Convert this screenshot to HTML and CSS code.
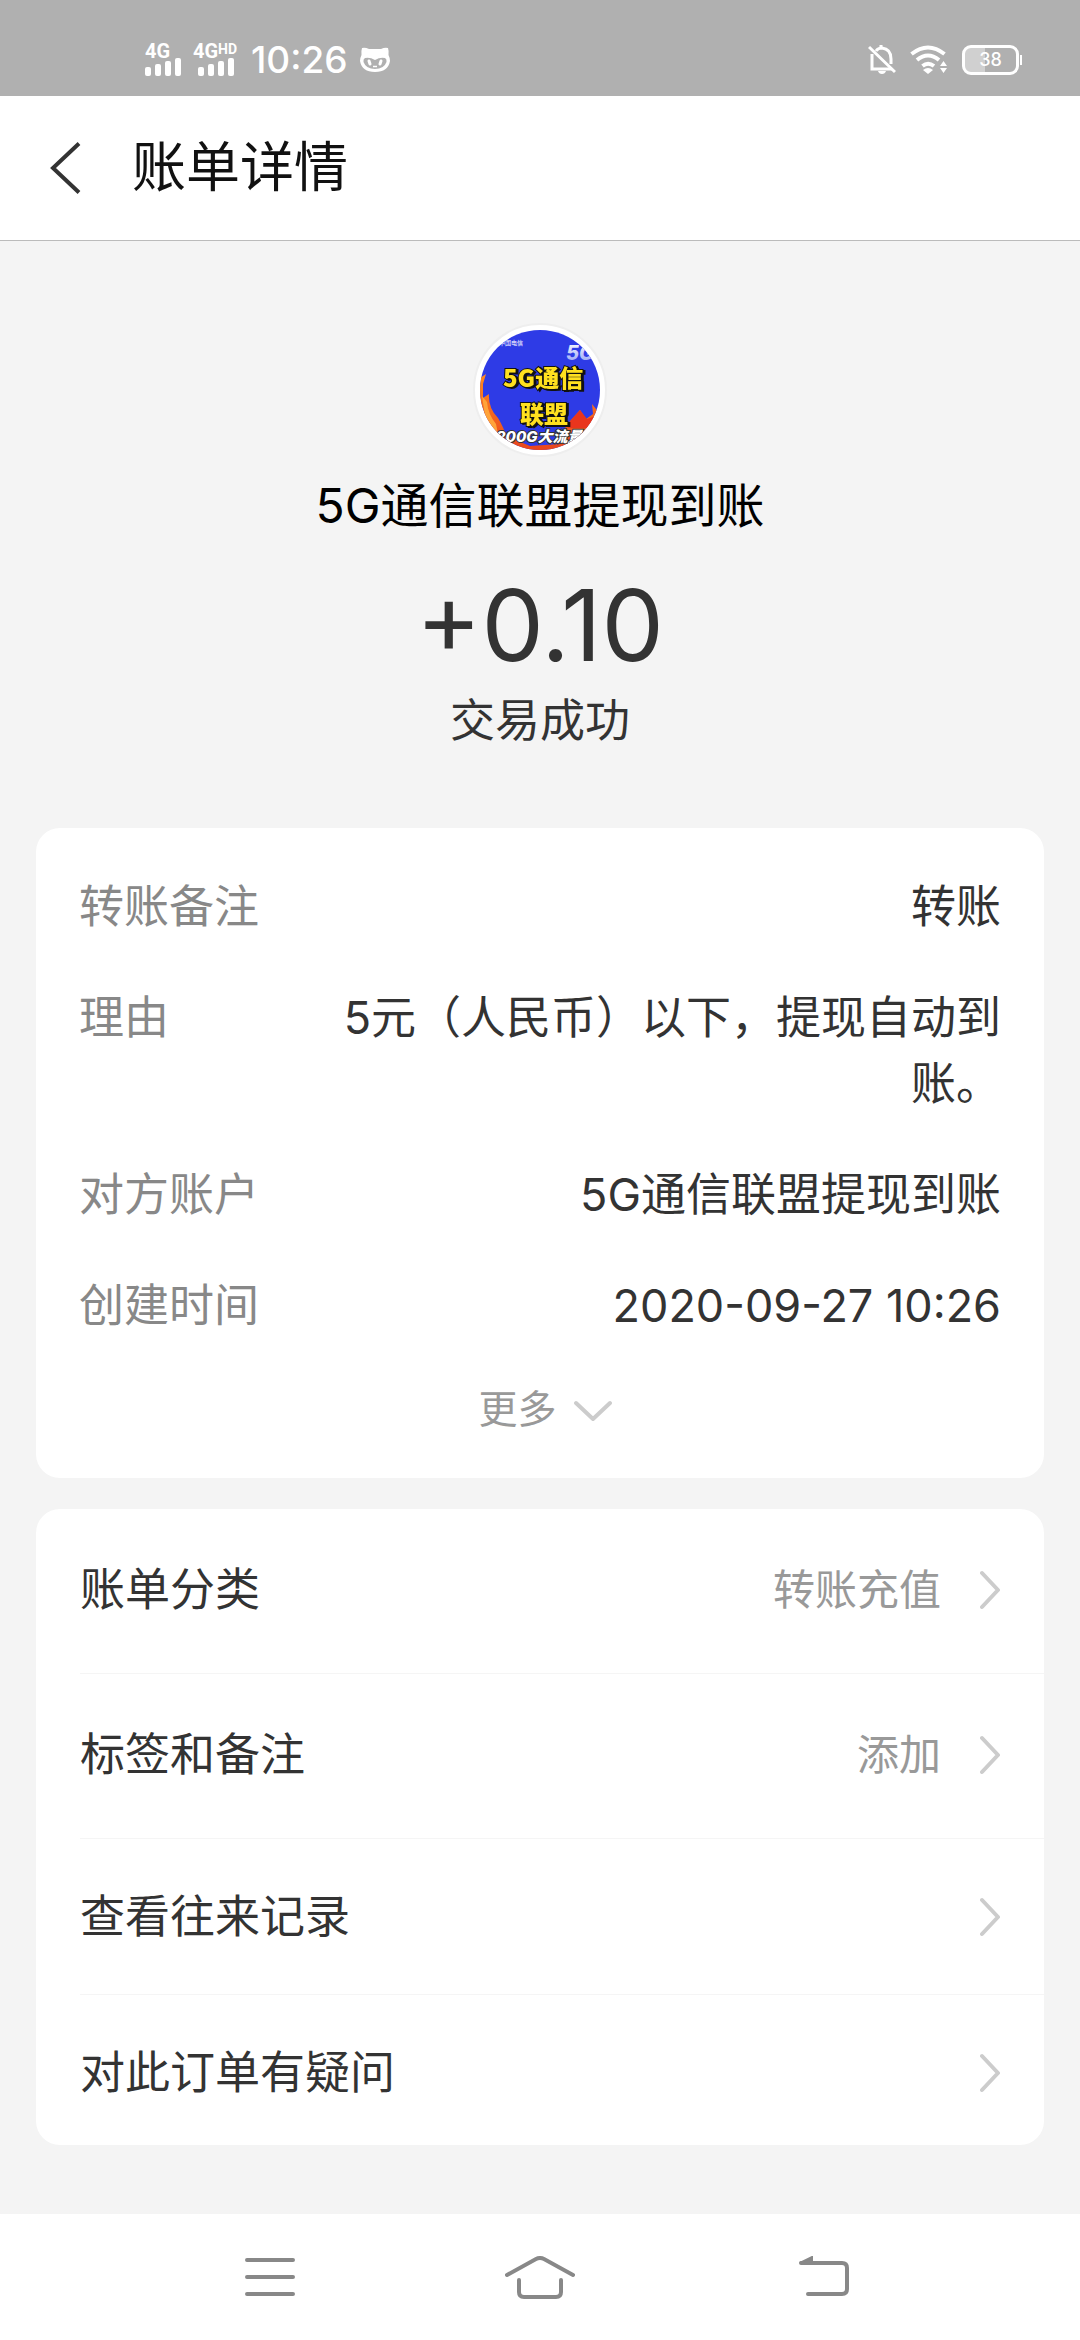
FILE: index.html
```html
<!DOCTYPE html>
<html lang="zh-CN">
<head>
<meta charset="utf-8">
<meta name="viewport" content="width=device-width, initial-scale=1">
<title>账单详情</title>
<link rel="stylesheet" href="styles.css">
</head>
<body>
<div class="status-bar">
  <div class="status-group">
    <div class="signal">
      <span class="signal-label">4G</span>
      <svg class="signal-bars" width="36" height="18" viewBox="0 0 36 18" fill="#fff" aria-hidden="true"><rect x="0" y="9" width="6" height="9" rx="2"/><rect x="10" y="6" width="6" height="12" rx="2"/><rect x="20" y="3" width="6" height="15" rx="2"/><rect x="30" y="0" width="6" height="18" rx="2"/></svg>
    </div>
    <div class="signal signal-hd">
      <span class="signal-label">4G<span class="hd">HD</span></span>
      <svg class="signal-bars" width="36" height="18" viewBox="0 0 36 18" fill="#fff" aria-hidden="true"><rect x="0" y="9" width="6" height="9" rx="2"/><rect x="10" y="6" width="6" height="12" rx="2"/><rect x="20" y="3" width="6" height="15" rx="2"/><rect x="30" y="0" width="6" height="18" rx="2"/></svg>
    </div>
    <span class="clock">10:26</span>
    <svg width="30" height="26" viewBox="0 0 30 26" aria-hidden="true">
      <path fill="#fff" fill-rule="evenodd" d="M2 1 Q5 0 9 2 H21 Q25 0 28 1 Q29 4 28.500 8 Q30 11 30 14 Q28 25 15 25 Q2 25 0 14 Q0 11 1.500 8 Q1 4 2 1Z M5 11 Q3 12 3.500 15 Q6 22 15 22 Q24 22 26.500 15 Q27 12 25 11 Q20 10 15 13 Q10 10 5 11Z"/>
      <path d="M9 14l1 3M21 14l-1 3" stroke="#fff" stroke-width="3" stroke-linecap="round"/>
      <path d="M13 19.500h4" stroke="#fff" stroke-width="1.500"/>
    </svg>
  </div>
  <div class="status-group status-right">
    <svg width="28" height="30" viewBox="0 0 28 30" fill="none" stroke="#fff" stroke-width="3" aria-hidden="true">
      <path d="M4 9v15h20M8 6Q10 3 14 3Q23 4 23 14v5"/><path d="M13 0v4M1 2L27 27" stroke-width="3"/><path d="M10 26h8Q17 29 14 29T10 26Z" fill="#fff" stroke="none"/>
    </svg>
    <svg class="wifi" width="38" height="30" viewBox="0 0 38 30" fill="none" stroke="#fff" stroke-width="4" aria-hidden="true">
      <path d="M1.500 9Q18 -4 34.500 9"/><path d="M7 15Q18 6 29 15"/><path d="M12.500 21Q18 16.500 24 21"/>
      <path d="M13 25Q18 21 23 25L18 29Z" fill="#fff" stroke="none"/><path d="M30 21L33.500 16L37 21ZM30 23L33.500 28L37 23Z" fill="#fff" stroke="none"/>
    </svg>
    <div class="battery"><span class="battery-level">38</span></div>
  </div>
</div>

<header class="title-bar">
  <button class="back" type="button" aria-label="返回">
    <svg width="33" height="52" viewBox="0 0 33 52" fill="none" stroke="#333" stroke-width="4" aria-hidden="true"><path d="M31 1.500L5 26L31 50.500"/></svg>
  </button>
  <h1 class="title">账单详情</h1>
</header>

<main class="content">
  <section class="summary">
    <div class="avatar">
      <svg width="120" height="120" viewBox="0 0 120 120" role="img" aria-label="5G通信联盟">
        <defs>
          <clipPath id="disc"><circle cx="60" cy="60" r="60"/></clipPath>
          <linearGradient id="flame" x1="0" y1="0" x2="0" y2="1"><stop offset="0" stop-color="#ff8a20"/><stop offset="1" stop-color="#e9451d"/></linearGradient>
          <linearGradient id="fade" x1="0" y1="0" x2="0" y2="1"><stop offset="0" stop-color="#fff"/><stop offset="1" stop-color="#8f9cf5"/></linearGradient>
        </defs>
        <g clip-path="url(#disc)">
          <rect width="120" height="120" fill="#2e3be6"/>
          <path fill="url(#flame)" d="M0 48L6 44L3 54L3 68L9 64Q8 78 18 88Q24 98 26 106L50 116L80 114L86 96L92 89L100 80L106 89L113 84L112 74L120 84V120H0Z"/>
          <path fill="#e9351d" d="M90 91L100 80L107 89L116 86L110 98H88Z"/>
          <path fill="#ffa33a" d="M2 66L7 72Q8 84 16 94L18 104L6 92Z"/>
          <text class="art-carrier" x="19" y="15">中国电信</text>
          <text class="art-corner" x="86" y="30" fill="url(#fade)">5G</text>
          <text class="art-name" x="23" y="57">5G通信</text>
          <text class="art-name" x="40" y="93">联盟</text>
          <text class="art-flow" x="16" y="112">200G大流量</text>
        </g>
      </svg>
    </div>
    <p class="payee">5G通信联盟提现到账</p>
    <p class="amount">+0.10</p>
    <p class="state">交易成功</p>
  </section>

  <section class="card details">
    <dl class="detail-list">
      <div class="detail"><dt>转账备注</dt><dd>转账</dd></div>
      <div class="detail"><dt>理由</dt><dd>5元（人民币）以下，提现自动到账。</dd></div>
      <div class="detail"><dt>对方账户</dt><dd>5G通信联盟提现到账</dd></div>
      <div class="detail"><dt>创建时间</dt><dd>2020-09-27 10:26</dd></div>
    </dl>
    <button class="more" type="button">更多
      <svg width="38" height="26" viewBox="0 0 38 26" fill="none" stroke="#ccc" stroke-width="4" stroke-linecap="round" stroke-linejoin="round" aria-hidden="true"><path d="M2 7L19 23L36 7"/></svg>
    </button>
  </section>

  <nav class="card actions" aria-label="账单操作">
    <a class="action action-tall" href="#category"><span class="action-name">账单分类</span><span class="action-value">转账充值</span><svg class="chevron" viewBox="0 0 20 40" aria-hidden="true"><path d="M2 3L18 20L2 37"/></svg></a>
    <a class="action action-tall" href="#tags"><span class="action-name">标签和备注</span><span class="action-value">添加</span><svg class="chevron" viewBox="0 0 20 40" aria-hidden="true"><path d="M2 3L18 20L2 37"/></svg></a>
    <a class="action" href="#history"><span class="action-name">查看往来记录</span><svg class="chevron" viewBox="0 0 20 40" aria-hidden="true"><path d="M2 3L18 20L2 37"/></svg></a>
    <a class="action" href="#help"><span class="action-name">对此订单有疑问</span><svg class="chevron" viewBox="0 0 20 40" aria-hidden="true"><path d="M2 3L18 20L2 37"/></svg></a>
  </nav>
</main>

<div class="system-nav">
  <button type="button" aria-label="最近任务"><svg width="50" height="44" viewBox="0 0 50 44" aria-hidden="true"><path d="M2 4H48M2 21H48M2 38H48"/></svg></button>
  <button type="button" aria-label="主屏幕"><svg width="70" height="44" viewBox="0 0 70 44" aria-hidden="true"><path d="M2 19L31 3Q35 1 39 3L68 19M14 24V36Q14 41 19 41H51Q56 41 56 36V24"/></svg></button>
  <button type="button" aria-label="返回上一页"><svg width="78" height="44" viewBox="0 0 78 44" aria-hidden="true"><path d="M30 7H71Q76 7 76 12V33Q76 38 71 38H37"/><path d="M29 7L41 1V7Z" fill="#888" stroke-width="2"/></svg></button>
</div>
</body>
</html>
```
FILE: styles.css
```css
* {
  box-sizing: border-box;
}

body {
  display: flex;
  flex-direction: column;
  min-height: 100vh;
  margin: 0;
  background: #f4f4f4;
  color: #333;
  font-family: Inter, "Noto Sans CJK SC", sans-serif;
  font-size: 45px;
  line-height: 66px;
}

button {
  display: flex;
  align-items: center;
  justify-content: center;
  padding: 0;
  border: 0;
  background: none;
  color: inherit;
  font: inherit;
}

h1, p, dl, dd {
  margin: 0;
  font-weight: 400;
}

svg {
  display: block;
  flex: none;
}

/* Phone status bar */
.status-bar {
  display: flex;
  justify-content: space-between;
  height: 96px;
  padding: 24px 61px 0 145px;
  background: #b0b0b0;
  color: #fff;
}

.status-group {
  display: flex;
  align-items: center;
  gap: 12px;
}

.status-right {
  gap: 14px;
}

.signal {
  display: flex;
  flex-direction: column;
  width: 36px;
}

.signal-hd {
  width: 46px;
}

.signal-hd .signal-bars {
  margin-left: 5px;
}

.signal-label {
  display: flex;
  font-family: Roboto, sans-serif;
  font-size: 20px;
  font-weight: 700;
  line-height: 14px;
}

.hd {
  font-size: 14px;
  line-height: 10px;
}

.clock {
  font-size: 37px;
  font-weight: 500;
}

.battery {
  position: relative;
  width: 57px;
  height: 30px;
  border: 3px solid #fff;
  border-radius: 9px;
  background: linear-gradient(90deg, #d0d0d0 20px, transparent 20px);
}

.battery::after {
  content: "";
  position: absolute;
  top: 7px;
  right: -6px;
  width: 2px;
  height: 10px;
  background: #fff;
}

.battery-level {
  display: block;
  font-size: 18px;
  font-weight: 500;
  line-height: 24px;
  text-align: center;
}

/* Title bar */
.title-bar {
  display: flex;
  align-items: center;
  gap: 51px;
  height: 145px;
  padding: 0 48px;
  border-bottom: 1px solid #bbb;
  background: #fff;
}

.title {
  color: #111;
  font-size: 54px;
}

/* Transaction summary */
.content {
  padding: 82px 36px 69px;
}

.summary {
  display: flex;
  flex-direction: column;
  align-items: center;
  margin-bottom: 74px;
}

.avatar {
  padding: 5px;
  border: 2px solid #eee;
  border-radius: 50%;
  background: #fff;
}

.art-name {
  fill: #ffe01f;
  stroke: #111;
  stroke-width: 2px;
  paint-order: stroke;
  filter: drop-shadow(2px 1px 0 #111);
  font-family: "Noto Sans CJK SC", sans-serif;
  font-size: 24px;
  font-weight: 900;
}

.art-carrier {
  fill: #fff;
  font-size: 6px;
}

.art-corner {
  font-size: 20px;
  font-style: italic;
  font-weight: 800;
}

.art-flow {
  fill: #fff;
  stroke: #333;
  stroke-width: 2px;
  paint-order: stroke;
  font-size: 15px;
  font-style: italic;
  font-weight: 800;
}

.payee {
  margin-top: 16px;
  color: #000;
  font-size: 48px;
}

.amount {
  margin-top: 32px;
  font-size: 99px;
  line-height: 108px;
}

.state {
  margin-top: 9px;
}

/* Cards */
.card {
  border-radius: 24px;
  background: #fff;
}

.details {
  margin-bottom: 31px;
  padding: 46px 43px 36px;
}

.detail-list {
  display: flex;
  flex-direction: column;
  gap: 45px;
}

.detail {
  display: flex;
}

.detail dt {
  flex: 0 0 225px;
  color: #888;
}

.detail dd {
  flex: 1;
  text-align: right;
}

.more {
  gap: 17px;
  margin: 37px auto 0;
  padding-left: 10px;
  color: #999;
  font-size: 39px;
}

.actions {
  padding-left: 44px;
}

.action {
  display: flex;
  align-items: center;
  padding: 51px 44px 50px 0;
  border-bottom: 1px solid #f5f5f5;
  color: inherit;
  line-height: 54px;
  text-decoration: none;
}

.action-tall {
  padding: 54px 44px 56px 0;
}

.action:last-child {
  padding-bottom: 45px;
  border-bottom: 0;
}

.action-name {
  flex: 1;
}

.action-value {
  color: #999;
  font-size: 42px;
}

.chevron {
  width: 20px;
  height: 40px;
  margin-left: 39px;
  fill: none;
  stroke: #ccc;
  stroke-width: 4px;
  stroke-linecap: round;
  stroke-linejoin: round;
}

/* System navigation */
.system-nav {
  display: grid;
  grid-template-columns: repeat(3, 1fr);
  height: 127px;
  margin-top: auto;
  padding: 0 12.5%;
  background: #fff;
}

.system-nav svg {
  fill: none;
  stroke: #888;
  stroke-width: 4px;
  stroke-linecap: round;
}
```
